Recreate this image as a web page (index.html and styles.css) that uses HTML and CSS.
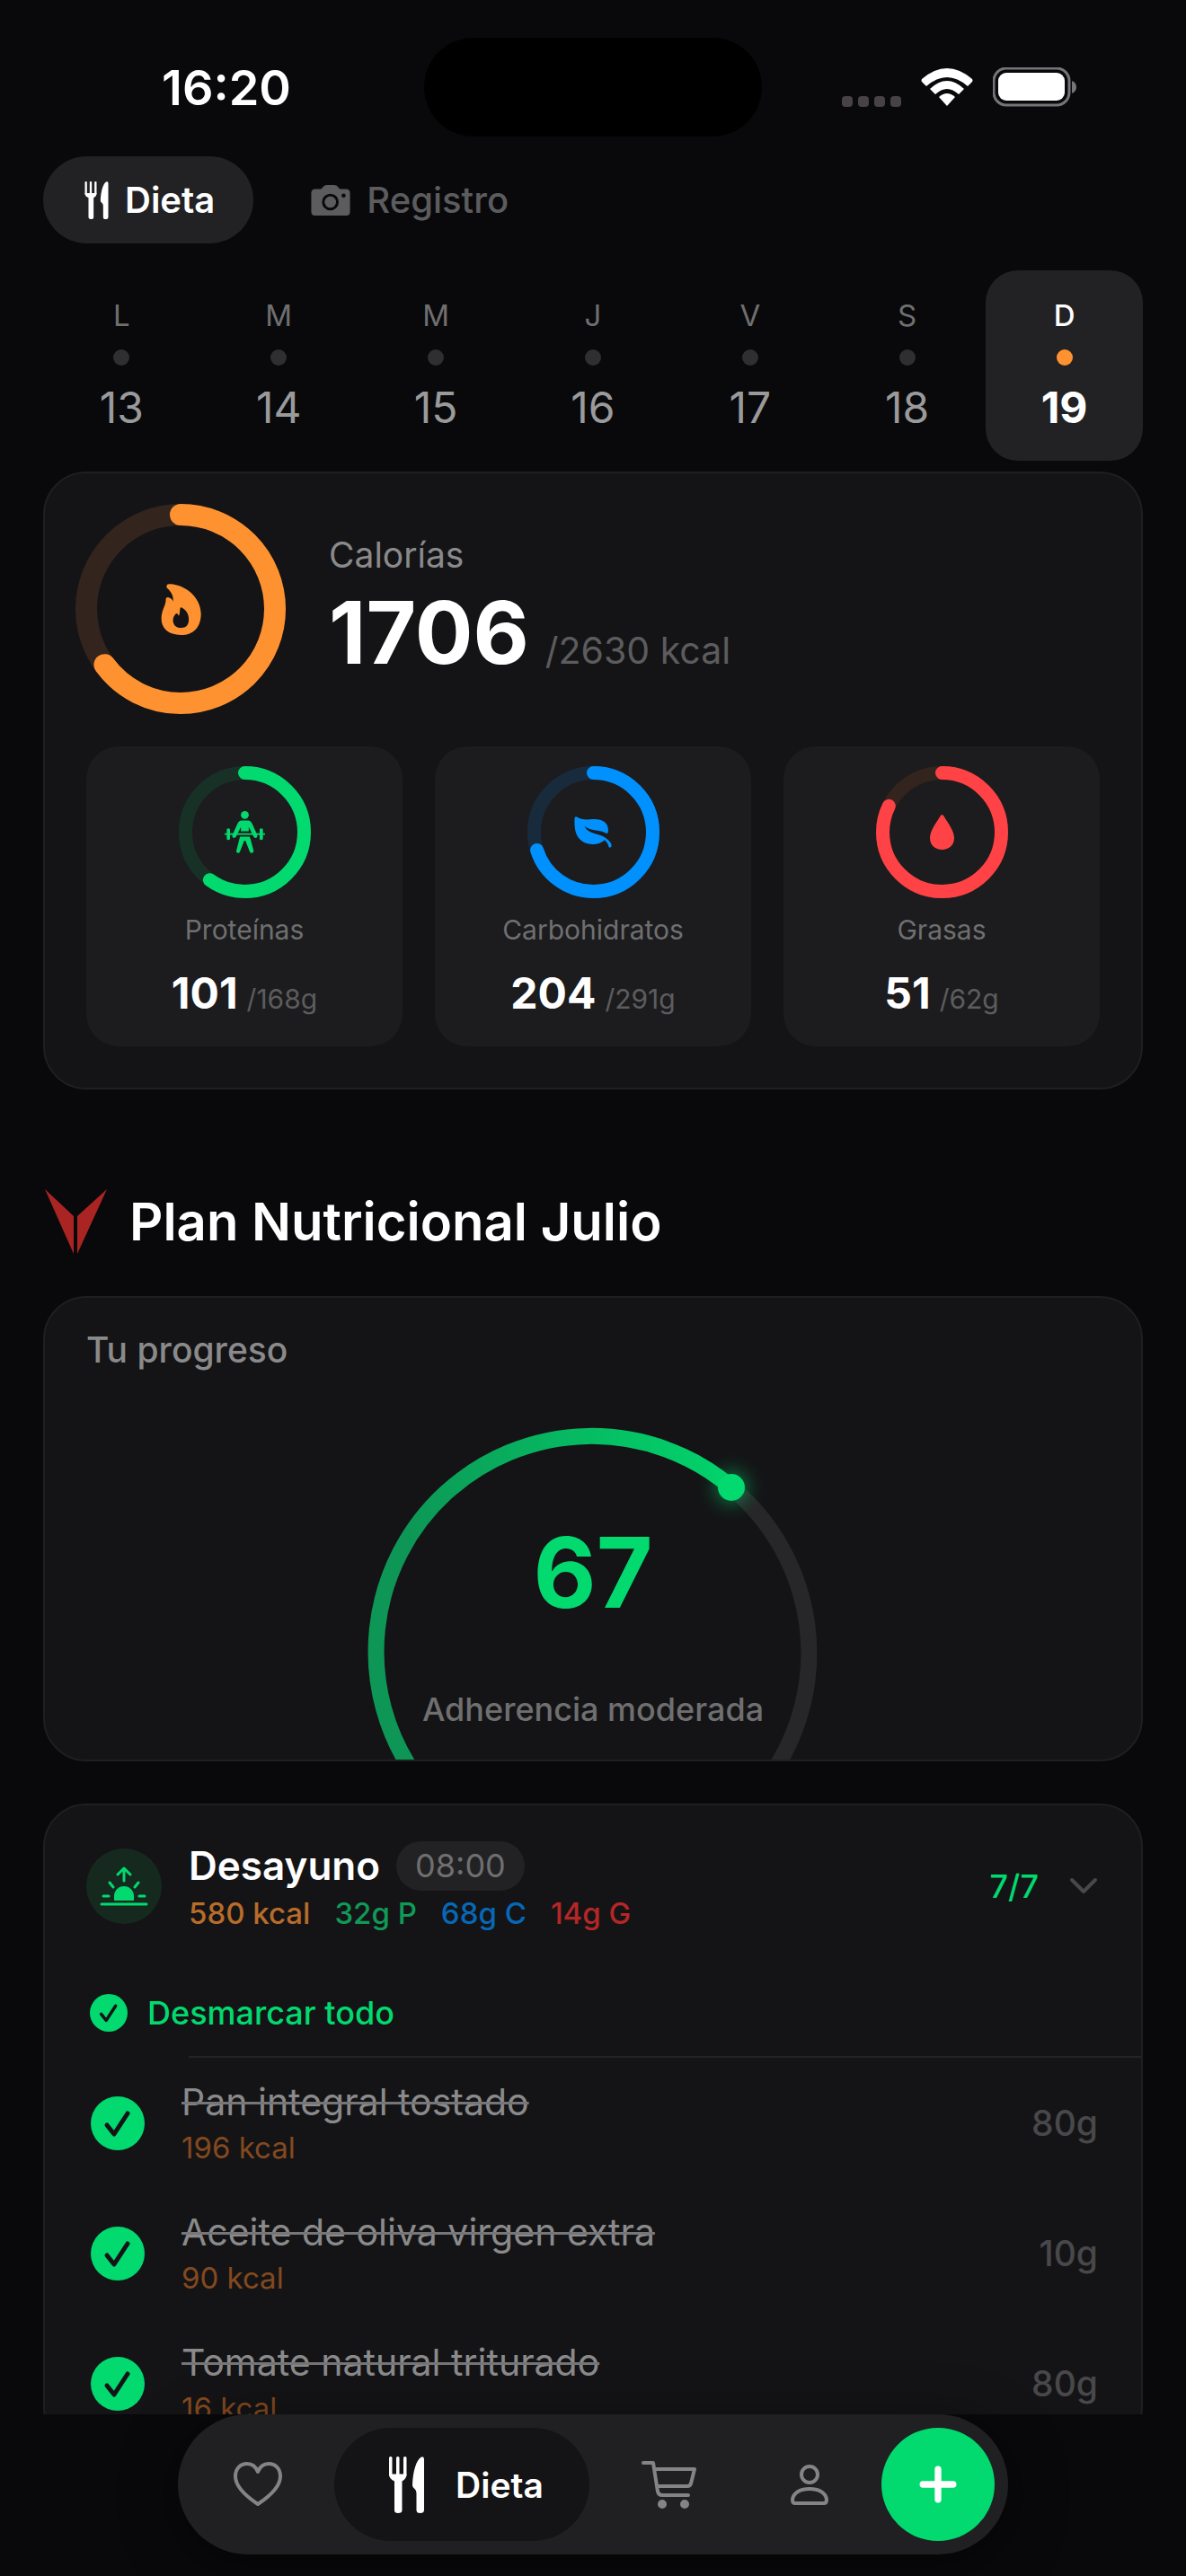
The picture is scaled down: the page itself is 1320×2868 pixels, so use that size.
FILE: index.html
```html
<!DOCTYPE html>
<html lang="es">
<head>
    <meta charset="UTF-8">
    <meta name="viewport" content="width=device-width, initial-scale=1.0">
    <title>Dieta</title>
    <link rel="stylesheet" href="styles.css">
</head>
<body>
    <!-- Shared icon shapes -->
    <svg class="sprite" aria-hidden="true">
        <symbol id="icon-utensils" viewBox="41 36 80 126">
            <rect x="42" y="36" width="7" height="44" rx="3"/>
            <rect x="58" y="36" width="7" height="44" rx="3"/>
            <rect x="74" y="36" width="7" height="44" rx="3"/>
            <path d="M42 75H81Q81 86 71 91V156Q71 162 62 162Q54 162 54 156V91Q42 86 42 75Z"/>
            <path d="M120 42Q120 35 114 37C103 43 95 68 94 100Q94 105 99 108Q103 111 103 118V155Q103 162 111 162Q120 162 120 155Z"/>
        </symbol>
        <symbol id="icon-check" viewBox="0 0 60 60">
            <path d="M18 32L26 42L41 19" fill="none" stroke="#141416" stroke-width="5" stroke-linecap="round" stroke-linejoin="round"/>
        </symbol>
    </svg>

    <header class="status-bar">
        <time class="clock">16:20</time>
        <div class="island"></div>
        <div class="status-icons">
            <div class="signal"><i></i><i></i><i></i><i></i></div>
            <svg class="wifi" viewBox="0 0 58 42">
                <path d="M29 42L20 32Q29 24 38 32Z"/>
                <path d="M10 23Q29 5 48 23L42 29Q29 17 16 29Z"/>
                <path d="M1 12Q29 -12 57 12Q58 14 57 15L52 20Q29 0 6 20L1 15Q0 14 1 12Z"/>
            </svg>
            <svg class="battery" viewBox="0 0 94 44">
                <rect x="1" y="1" width="84" height="41" rx="14" fill="none" stroke="#767476" stroke-width="3"/>
                <rect x="6" y="6" width="74" height="31" rx="9" fill="#fff"/>
                <path d="M88 15Q93 17 93 22Q93 27 88 29Z" fill="#767476"/>
            </svg>
        </div>
    </header>

    <main class="content">
        <nav class="tabs">
            <button class="tab active">
                <svg class="tab-icon"><use href="#icon-utensils"/></svg>
                Dieta
            </button>
            <button class="tab">
                <svg class="camera-icon" viewBox="800 46 134 104">
                    <path d="M814 60H832Q837 60 840 54Q844 46 854 46H880Q889 46 893 54Q896 60 901 60H920Q933 60 933 74V136Q933 150 920 150H814Q801 150 801 136V74Q801 60 814 60Z"/>
                    <circle cx="866" cy="104" r="24" fill="none" stroke="#09090b" stroke-width="9"/>
                    <circle cx="911" cy="82" r="7" fill="#09090b"/>
                </svg>
                Registro
            </button>
        </nav>

        <div class="week">
            <button class="day"><span>L</span><i></i><b>13</b></button>
            <button class="day"><span>M</span><i></i><b>14</b></button>
            <button class="day"><span>M</span><i></i><b>15</b></button>
            <button class="day"><span>J</span><i></i><b>16</b></button>
            <button class="day"><span>V</span><i></i><b>17</b></button>
            <button class="day"><span>S</span><i></i><b>18</b></button>
            <button class="day selected"><span>D</span><i></i><b>19</b></button>
        </div>

        <section class="card summary">
            <div class="calories">
                <div class="ring orange">
                    <svg viewBox="0 0 234 234">
                        <circle class="track" cx="117" cy="117" r="105" stroke-width="24"/>
                        <circle class="bar" cx="117" cy="117" r="105" stroke-width="24" pathLength="100" stroke-dasharray="64.9 100"/>
                    </svg>
                    <svg class="flame" viewBox="26 30 134 172">
                        <path fill-rule="evenodd" d="M45 35Q47 30 58 31C105 34 158 72 160 130C160 175 135 202 93 202C50 202 26 180 27 145C28 115 42 105 42 82C42 76 48 73 54 77C62 81 66 86 66 90C68 80 66 60 46 44Q43 40 45 35ZM90 112Q92 107 97 111C112 120 119 133 119 150C119 168 110 178 93 178C76 178 66 168 66 152C66 143 70 137 75 131Q80 127 83 133L85 138C90 132 88 120 90 112Z"/>
                    </svg>
                </div>
                <div class="calories-text">
                    <h2>Calorías</h2>
                    <p><strong>1706</strong> <span>/2630 kcal</span></p>
                </div>
            </div>

            <div class="macros">
                <div class="macro">
                    <div class="ring green">
                        <svg viewBox="0 0 147 147">
                            <circle class="track" cx="73.5" cy="73.5" r="66" stroke-width="15"/>
                            <circle class="bar" cx="73.5" cy="73.5" r="66" stroke-width="15" pathLength="100" stroke-dasharray="60.1 100"/>
                        </svg>
                        <svg class="lifter" viewBox="28 41 134 140">
                            <circle cx="95" cy="54" r="13"/>
                            <path d="M82 72H108Q116 74 120 84L136 120Q138 130 130 130Q126 130 124 126L108 94V108H82V94L66 126Q63 130 58 130Q52 129 54 120L71 82Q75 73 82 72Z"/>
                            <path d="M79 126H111Q115 136 118 150L124 172Q124 180 117 180Q112 180 111 175L97 139L93 139L79 175Q78 180 73 180Q66 180 67 172Z"/>
                            <path d="M28 115H162V120H28Z"/>
                            <rect x="35" y="98" width="11" height="39" rx="5"/>
                            <rect x="144" y="98" width="11" height="39" rx="5"/>
                        </svg>
                    </div>
                    <h3>Proteínas</h3>
                    <p><strong>101</strong><span>/168g</span></p>
                </div>
                <div class="macro">
                    <div class="ring blue">
                        <svg viewBox="0 0 147 147">
                            <circle class="track" cx="73.5" cy="73.5" r="66" stroke-width="15"/>
                            <circle class="bar" cx="73.5" cy="73.5" r="66" stroke-width="15" pathLength="100" stroke-dasharray="70.1 100"/>
                        </svg>
                        <svg class="leaf" viewBox="1196 60 124 105">
                            <path d="M1197 64Q1200 58 1207 63C1215 70 1235 72 1258 69C1290 68 1308 80 1309 105Q1309 113 1306 118Q1298 113 1288 110C1270 104 1250 108 1230 92C1235 108 1256 115 1280 122C1300 127 1320 145 1320 158Q1318 166 1311 163C1309 152 1303 145 1297 139C1275 158 1245 156 1225 145C1200 130 1194 100 1197 64Z"/>
                        </svg>
                    </div>
                    <h3>Carbohidratos</h3>
                    <p><strong>204</strong><span>/291g</span></p>
                </div>
                <div class="macro">
                    <div class="ring red">
                        <svg viewBox="0 0 147 147">
                            <circle class="track" cx="73.5" cy="73.5" r="66" stroke-width="15"/>
                            <circle class="bar" cx="73.5" cy="73.5" r="66" stroke-width="15" pathLength="100" stroke-dasharray="82.3 100"/>
                        </svg>
                        <svg class="drop" viewBox="0 0 27 39">
                            <path d="M12 1Q13.500-1 15 1C20 9 27 18 27 26C27 34 21 39 13.500 39C6 39 0 34 0 26C0 18 7 9 12 1Z"/>
                        </svg>
                    </div>
                    <h3>Grasas</h3>
                    <p><strong>51</strong><span>/62g</span></p>
                </div>
            </div>
        </section>

        <div class="plan-title">
            <svg class="plan-logo" viewBox="0 0 72 72">
                <path d="M2 0L34 30V72ZM71 0L38 30V72Z"/>
            </svg>
            <h1>Plan Nutricional Julio</h1>
        </div>

        <section class="card progress">
            <h2>Tu progreso</h2>
            <div class="gauge">
                <svg viewBox="0 0 498 400">
                    <defs>
                        <linearGradient id="gaugeFill" gradientUnits="userSpaceOnUse" x1="60" y1="180" x2="403" y2="65">
                            <stop offset="0" stop-color="#0d9655"/>
                            <stop offset="1" stop-color="#02d26b"/>
                        </linearGradient>
                        <filter id="glow" x="-150%" y="-150%" width="400%" height="400%">
                            <feGaussianBlur stdDeviation="10"/>
                        </filter>
                    </defs>
                    <g fill="none" stroke-width="18">
                        <path stroke="#272628" d="M403 65A240 240 0 0 1 446 387"/>
                        <path stroke="url(#gaugeFill)" d="M52 387A240 240 0 0 1 403 65"/>
                    </g>
                    <circle cx="403" cy="65" r="18" fill="#02d96f" opacity="0.5" filter="url(#glow)"/>
                    <circle cx="403" cy="65" r="15" fill="#02d96f"/>
                </svg>
                <div class="gauge-text">
                    <strong>67</strong>
                    <p>Adherencia moderada</p>
                </div>
            </div>
        </section>

        <section class="card meal">
            <div class="meal-header">
                <div class="meal-icon">
                    <svg viewBox="0 0 54 44">
                        <path class="rays" d="M27 16V2M20 9L27 2L34 9M11 18L15 23M43 18L39 23M4 33H10M44 33H50M2 42H52"/>
                        <path d="M16 38V33A11 11 0 0 1 38 33V38Z"/>
                    </svg>
                </div>
                <div class="meal-info">
                    <div class="meal-name">
                        <h2>Desayuno</h2>
                        <time>08:00</time>
                    </div>
                    <p class="meal-macros">
                        <span class="kcal">580 kcal</span>
                        <span class="protein">32g P</span>
                        <span class="carbs">68g C</span>
                        <span class="fat">14g G</span>
                    </p>
                </div>
                <span class="meal-count">7/7</span>
                <button class="collapse" aria-label="Plegar">
                    <svg viewBox="0 0 36 24"><path d="M5 5L18 18L31 5"/></svg>
                </button>
            </div>

            <button class="uncheck-all">
                <span class="dot-check"><svg><use href="#icon-check"/></svg></span>
                Desmarcar todo
            </button>

            <ul class="foods">
                <li>
                    <label class="food">
                        <span class="check"><input type="checkbox" checked><svg><use href="#icon-check"/></svg></span>
                        <span class="food-text"><s>Pan integral tostado</s><small>196 kcal</small></span>
                        <span class="amount">80g</span>
                    </label>
                </li>
                <li>
                    <label class="food">
                        <span class="check"><input type="checkbox" checked><svg><use href="#icon-check"/></svg></span>
                        <span class="food-text"><s>Aceite de oliva virgen extra</s><small>90 kcal</small></span>
                        <span class="amount">10g</span>
                    </label>
                </li>
                <li>
                    <label class="food">
                        <span class="check"><input type="checkbox" checked><svg><use href="#icon-check"/></svg></span>
                        <span class="food-text"><s>Tomate natural triturado</s><small>16 kcal</small></span>
                        <span class="amount">80g</span>
                    </label>
                </li>
            </ul>
        </section>
    </main>

    <footer class="bottom">
        <nav class="tab-bar">
            <a href="#" class="tab-link" aria-label="Salud">
                <svg class="heart" viewBox="0 0 54 50"><path d="M27 47C12 37 2 27 2 16C2 7 8 2 15 2C21 2 25 6 27 11C29 6 33 2 39 2C46 2 52 7 52 16C52 27 42 37 27 47Z"/></svg>
            </a>
            <a href="#" class="tab-link current">
                <svg class="utensils"><use href="#icon-utensils"/></svg>
                Dieta
            </a>
            <a href="#" class="tab-link" aria-label="Compra">
                <svg class="cart" viewBox="0 0 61 53">
                    <path d="M2 2H13L18 34Q19 38 23 38H52M14 9H59L55 25Q54 28 51 28H17"/>
                    <circle cx="23" cy="48" r="3"/><circle cx="48" cy="48" r="3"/>
                </svg>
            </a>
            <a href="#" class="tab-link" aria-label="Perfil">
                <svg class="person" viewBox="0 0 42 45">
                    <circle cx="21" cy="11" r="9"/>
                    <path d="M5 43Q2 43 2 39C3 31 11 27 21 27C31 27 39 31 40 39Q40 43 37 43Z"/>
                </svg>
            </a>
            <button class="add" aria-label="Añadir">
                <svg viewBox="0 0 40 40"><path d="M20 4V36M4 20H36"/></svg>
            </button>
        </nav>
    </footer>
</body>
</html>
```
FILE: styles.css
```css
* {
    box-sizing: border-box;
    margin: 0;
    padding: 0;
}
body {
    display: flex;
    flex-direction: column;
    height: 100vh;
    background-color: #09090b;
    color: #fff;
    font-family: Inter, "Liberation Sans", sans-serif;
}
button, input {
    border: none;
    background: none;
    color: inherit;
    font: inherit;
    cursor: pointer;
}
a {
    color: inherit;
    text-decoration: none;
}
svg {
    display: block;
    fill: currentColor;
}
.sprite {
    display: none;
}

/* Status bar */
.status-bar {
    display: grid;
    grid-template-columns: 1fr 376px 1fr;
    align-items: center;
    justify-items: center;
    padding: 42px 32px 0;
}
.clock {
    font-size: 54px;
    font-weight: 600;
}
.island {
    width: 100%;
    height: 110px;
    border-radius: 55px;
    background-color: #000;
}
.status-icons {
    display: flex;
    align-items: center;
    gap: 22px;
}
.signal {
    display: flex;
    align-self: flex-end;
    gap: 6px;
}
.signal i {
    width: 12px;
    height: 12px;
    border-radius: 4px;
    background-color: #464246;
}
.wifi {
    width: 58px;
    height: 42px;
}
.battery {
    width: 94px;
    height: 44px;
}

/* Scrolling area */
.content {
    flex: 1;
    min-height: 0;
    padding: 22px 48px 0;
    overflow-y: auto;
    scrollbar-width: none;
}
.tabs {
    display: flex;
    gap: 21px;
}
.tab {
    display: flex;
    align-items: center;
    gap: 18px;
    padding: 24px 43px;
    border-radius: 49px;
    color: #5c5c5e;
    font-size: 40px;
    font-weight: 500;
    line-height: 49px;
}
.tab.active {
    gap: 15px;
    background-color: #222224;
    color: #fff;
    font-weight: 600;
}
.tab-icon {
    width: 33px;
    height: 42px;
}
.camera-icon {
    width: 44px;
    height: 34px;
}

.week {
    display: grid;
    grid-template-columns: repeat(7, 1fr);
    margin: 30px 0 12px;
}
.day {
    display: flex;
    flex-direction: column;
    align-items: center;
    padding: 32px 0 30px;
    border-radius: 36px;
}
.day span {
    color: #6f6f70;
    font-size: 33px;
    line-height: 36px;
}
.day i {
    width: 18px;
    height: 18px;
    margin: 20px 0 18px;
    border-radius: 50%;
    background-color: #2f2e30;
}
.day b {
    color: #9a9a9b;
    font-size: 48px;
    font-weight: 400;
    line-height: 58px;
}
.day.selected {
    background-color: #222224;
}
.day.selected span {
    color: #fff;
    font-weight: 500;
}
.day.selected i {
    background-color: #ff9230;
}
.day.selected b {
    color: #fff;
    font-weight: 700;
}

.card {
    border: 2px solid #1f1f21;
    border-radius: 48px;
    background-color: #141416;
}

/* Calories and macros */
.summary {
    padding: 34px 46px 46px;
}
.calories {
    display: flex;
    align-items: center;
    gap: 48px;
    margin-left: -12px;
}
.ring {
    display: grid;
    place-items: center;
}
.ring > svg {
    grid-area: 1 / 1;
}
.ring circle.track,
.ring circle.bar {
    fill: none;
}
.ring .track {
    stroke: #33241d;
}
.ring .bar {
    stroke: currentColor;
    stroke-linecap: round;
    transform: rotate(-90deg);
    transform-origin: center;
}
.orange {
    width: 234px;
    height: 234px;
    color: #ff9230;
}
.green {
    color: #02d96f;
}
.green .track {
    stroke: #183127;
}
.blue {
    color: #0091ff;
}
.blue .track {
    stroke: #172b3d;
}
.red {
    color: #ff4245;
}
.flame {
    width: 45px;
    height: 57px;
}
.lifter {
    width: 45px;
    height: 47px;
}
.leaf {
    width: 42px;
    height: 35px;
}
.drop {
    width: 27px;
    height: 39px;
}
.calories-text h2 {
    margin-bottom: 4px;
    color: #8a8a8b;
    font-size: 39px;
    font-weight: 400;
    line-height: 48px;
}
.calories-text p {
    display: flex;
    align-items: baseline;
    gap: 18px;
}
.calories-text strong {
    font-size: 96px;
    font-weight: 700;
    line-height: 116px;
}
.calories-text span {
    color: #5c5c5e;
    font-size: 41px;
    line-height: 48px;
}
.macros {
    display: grid;
    grid-template-columns: repeat(3, 1fr);
    gap: 36px;
    margin-top: 36px;
}
.macro {
    display: flex;
    flex-direction: column;
    align-items: center;
    padding: 22px 0 30px;
    border-radius: 36px;
    background-color: #1c1c1e;
}
.macro .ring {
    width: 147px;
    height: 147px;
}
.macro h3 {
    margin: 17px 0 24px;
    color: #6f6f70;
    font-size: 30px;
    font-weight: 400;
    line-height: 36px;
}
.macro p {
    display: flex;
    align-items: baseline;
    gap: 10px;
}
.macro strong {
    font-size: 48px;
    font-weight: 700;
    line-height: 58px;
}
.macro span {
    color: #5c5c5e;
    font-size: 30px;
    line-height: 36px;
}

/* Plan */
.plan-title {
    display: flex;
    align-items: center;
    gap: 24px;
    margin: 111px 0 47px;
}
.plan-logo {
    width: 72px;
    height: 72px;
    color: #aa2424;
}
.plan-title h1 {
    font-size: 58px;
    font-weight: 600;
    line-height: 72px;
}
.progress {
    padding: 34px 46px 0;
    overflow: hidden;
}
.progress h2 {
    color: #8a8a8b;
    font-size: 39px;
    font-weight: 500;
    line-height: 48px;
}
.gauge {
    display: grid;
    justify-items: center;
    height: 368px;
    margin-top: 64px;
}
.gauge > svg {
    grid-area: 1 / 1;
    width: 498px;
    height: 400px;
    overflow: visible;
}
.gauge-text {
    grid-area: 1 / 1;
    padding-top: 100px;
    text-align: center;
}
.gauge-text strong {
    color: #02d96f;
    font-size: 108px;
    font-weight: 700;
    line-height: 120px;
}
.gauge-text p {
    margin-top: 68px;
    color: #6f6f70;
    font-size: 36px;
    font-weight: 500;
    line-height: 48px;
}

/* Meal */
.meal {
    margin-top: 47px;
    padding-top: 40px;
}
.meal-header {
    display: flex;
    align-items: center;
    padding: 0 46px;
}
.meal-icon {
    display: grid;
    place-items: center;
    width: 84px;
    height: 84px;
    border-radius: 50%;
    background-color: #15291f;
    color: #02d96f;
}
.meal-icon svg {
    width: 54px;
    height: 44px;
}
.meal-icon .rays {
    fill: none;
    stroke: currentColor;
    stroke-width: 3;
    stroke-linecap: round;
    stroke-linejoin: round;
}
.meal-info {
    flex: 1;
    margin-left: 30px;
}
.meal-name {
    display: flex;
    align-items: center;
    gap: 18px;
}
.meal-name h2 {
    font-size: 44px;
    font-weight: 600;
    line-height: 55px;
}
.meal-name time {
    padding: 0 21px;
    border-radius: 28px;
    background-color: #222224;
    color: #6f6f70;
    font-size: 36px;
    line-height: 55px;
}
.meal-macros {
    display: flex;
    gap: 27px;
    margin-top: 5px;
    font-size: 33px;
    font-weight: 500;
    line-height: 40px;
}
.kcal {
    color: #b86c2a;
}
.protein {
    color: #109957;
}
.carbs {
    color: #0668b6;
}
.fat {
    color: #b52626;
}
.meal-count {
    color: #02d96f;
    font-size: 36px;
    font-weight: 500;
}
.collapse {
    margin-left: 32px;
}
.collapse svg {
    width: 36px;
    height: 24px;
    fill: none;
    stroke: #48484a;
    stroke-width: 4;
    stroke-linecap: round;
    stroke-linejoin: round;
}
.uncheck-all {
    display: flex;
    align-items: center;
    gap: 22px;
    margin: 67px 50px 24px;
    color: #02d96f;
    font-size: 36px;
    font-weight: 500;
    line-height: 48px;
}
.dot-check {
    border-radius: 50%;
    background-color: #02d96f;
}
.dot-check svg {
    width: 42px;
    height: 42px;
}
.foods {
    list-style: none;
}
.foods::before {
    content: "";
    display: block;
    height: 2px;
    margin-left: 160px;
    background-color: #242426;
}
.food {
    display: flex;
    align-items: center;
    height: 145px;
    padding: 0 48px 0 51px;
}
.check {
    display: grid;
}
.check input,
.check svg {
    grid-area: 1 / 1;
    width: 60px;
    height: 60px;
}
.check input {
    appearance: none;
    border: 3px solid #48484a;
    border-radius: 50%;
}
.check input:checked {
    border: none;
    background-color: #02d96f;
}
.check svg {
    pointer-events: none;
}
.check input:not(:checked) + svg {
    visibility: hidden;
}
.food-text {
    flex: 1;
    margin-left: 41px;
}
.food-text s {
    display: table;
    color: #8a8a8b;
    font-size: 41px;
    line-height: 54px;
    text-decoration-color: #767678;
    text-decoration-thickness: 3px;
}
.food-text small {
    display: block;
    color: #84491f;
    font-size: 33px;
    line-height: 48px;
}
.amount {
    color: #48484a;
    font-size: 39px;
    font-weight: 500;
}

/* Bottom bar */
.bottom {
    position: relative;
    padding: 0 198px 24px;
}
.tab-bar {
    display: flex;
    align-items: center;
    gap: 12px;
    padding: 15px;
    border-radius: 78px;
    background-color: #202022;
    box-shadow: 0 12px 60px rgba(0, 0, 0, 0.5);
}
.tab-link {
    display: flex;
    flex: 1 1 auto;
    align-items: center;
    justify-content: center;
    height: 126px;
    border-radius: 63px;
    color: #848486;
}
.tab-link svg {
    fill: none;
    stroke: currentColor;
    stroke-width: 4;
    stroke-linecap: round;
    stroke-linejoin: round;
}
.tab-link.current {
    flex: none;
    gap: 34px;
    padding: 0 51px 0 60px;
    background-color: #141416;
    color: #fff;
    font-size: 39px;
    font-weight: 600;
}
.tab-link .utensils {
    width: 41px;
    height: 63px;
    fill: currentColor;
    stroke: none;
}
.heart {
    width: 54px;
    height: 50px;
}
.cart {
    width: 61px;
    height: 53px;
}
.cart circle {
    fill: currentColor;
}
.person {
    width: 42px;
    height: 45px;
}
.add {
    display: grid;
    place-items: center;
    width: 126px;
    height: 126px;
    border-radius: 50%;
    background-color: #02d96f;
}
.add svg {
    width: 42px;
    height: 42px;
    stroke: #fff;
    stroke-width: 7;
    stroke-linecap: round;
}
```
